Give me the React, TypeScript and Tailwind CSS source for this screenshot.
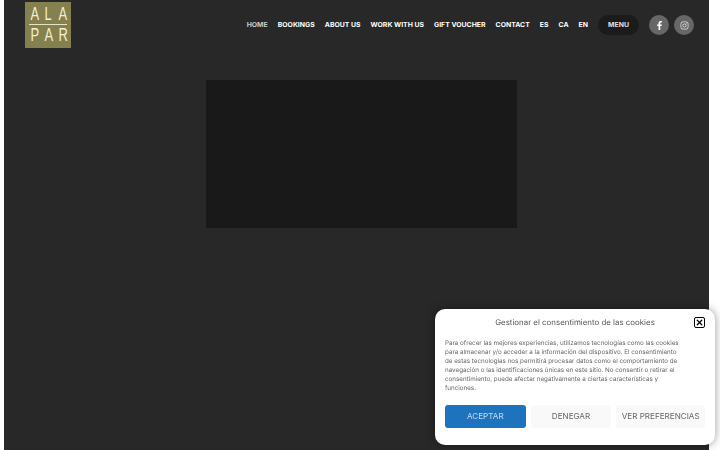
import { X } from "lucide-react";
import { FaFacebookF, FaInstagram } from "react-icons/fa";

const navItems = ["BOOKINGS", "ABOUT US", "WORK WITH US", "GIFT VOUCHER", "CONTACT", "ES", "CA", "EN"];

function LogoRow({ letters }: { letters: string[] }) {
  return (
    <div className="flex h-[19px] justify-between">
      {letters.map((letter, i) => (
        <span key={i} className="inline-block w-[10px] scale-x-[0.72] text-center">
          {letter}
        </span>
      ))}
    </div>
  );
}

function Logo() {
  return (
    <div className="flex h-[46px] w-[46px] flex-col items-stretch bg-[#84804f] px-[4px] pt-[3px] font-['Liberation_Sans',sans-serif] text-[18px] leading-[19px] text-[#f3eed0]">
      <LogoRow letters={["A", "L", "A"]} />
      <div className="h-[1px] bg-[#e9e4c0]" />
      <div className="mt-[1px]">
        <LogoRow letters={["P", "A", "R"]} />
      </div>
    </div>
  );
}

function Header() {
  return (
    <header className="flex h-[50px] items-start pl-[21px] pr-[15px] pt-[2px]">
      <Logo />
      <nav className="ml-auto mt-[13px] flex h-[20px] items-center text-[6.9px] font-bold text-white antialiased [text-rendering:geometricPrecision]">
        <a className="text-[#c9c9c9]">HOME</a>
        {navItems.map((item) => (
          <a key={item} className="ml-[10px]">
            {item}
          </a>
        ))}
        <a className="ml-[10px] flex h-[20px] w-[41px] items-center justify-center rounded-full bg-[#1b1b1b] text-[#e0e0e0]">
          MENU
        </a>
      </nav>
      <div className="ml-[10px] mt-[13px] flex gap-[5px]">
        <a className="flex h-[20px] w-[20px] items-center justify-center rounded-full bg-[#676767] text-white">
          <FaFacebookF size={9} />
        </a>
        <a className="flex h-[20px] w-[20px] items-center justify-center rounded-full bg-[#676767] text-[#e4e4e4]">
          <FaInstagram size={9} />
        </a>
      </div>
    </header>
  );
}

function CookieDialog() {
  return (
    <div className="fixed left-[435px] top-[309px] h-[136px] w-[280px] rounded-[10px] bg-white px-[10px] pt-[7px] antialiased shadow-[0_0_10px_rgba(0,0,0,0.4)] [text-rendering:geometricPrecision]">
      <div className="relative text-center text-[7.9px] leading-[12px] text-[#555]">
        Gestionar el consentimiento de las cookies
        <span className="absolute right-[0px] top-[1px] flex h-[11px] w-[11px] items-center justify-center rounded-[2px] border-[1.5px] border-black text-black">
          <X size={9} strokeWidth={3.5} />
        </span>
      </div>
      <p className="mt-[11px] text-[6.26px] leading-[9px] text-[#666]">
        Para ofrecer las mejores experiencias, utilizamos tecnologías como las cookies
        <br />
        para almacenar y/o acceder a la información del dispositivo. El consentimiento
        <br />
        de estas tecnologías nos permitirá procesar datos como el comportamiento de
        <br />
        navegación o las identificaciones únicas en este sitio. No consentir o retirar el
        <br />
        consentimiento, puede afectar negativamente a ciertas características y
        <br />
        funciones.
      </p>
      <div className="mt-[12px] flex gap-[5px] text-[8.1px]">
        <button className="h-[23px] w-[81px] rounded-[3px] bg-[#1e73be] text-[#c9dcee]">ACEPTAR</button>
        <button className="h-[23px] w-[81px] rounded-[3px] bg-[#f9f9f9] text-[#666]">DENEGAR</button>
        <button className="h-[23px] w-[89px] rounded-[3px] bg-[#f9f9f9] text-[#666]">VER PREFERENCIAS</button>
      </div>
    </div>
  );
}

export default function App() {
  return (
    <div className="h-[450px] w-[720px] overflow-hidden bg-white pl-[4px] font-['Inter',sans-serif]">
      <main className="h-[450px] w-[705px] bg-[#282828]">
        <Header />
        <div className="ml-[202px] mt-[30px] h-[148px] w-[311px] bg-[#191919]" />
      </main>
      <CookieDialog />
    </div>
  );
}
